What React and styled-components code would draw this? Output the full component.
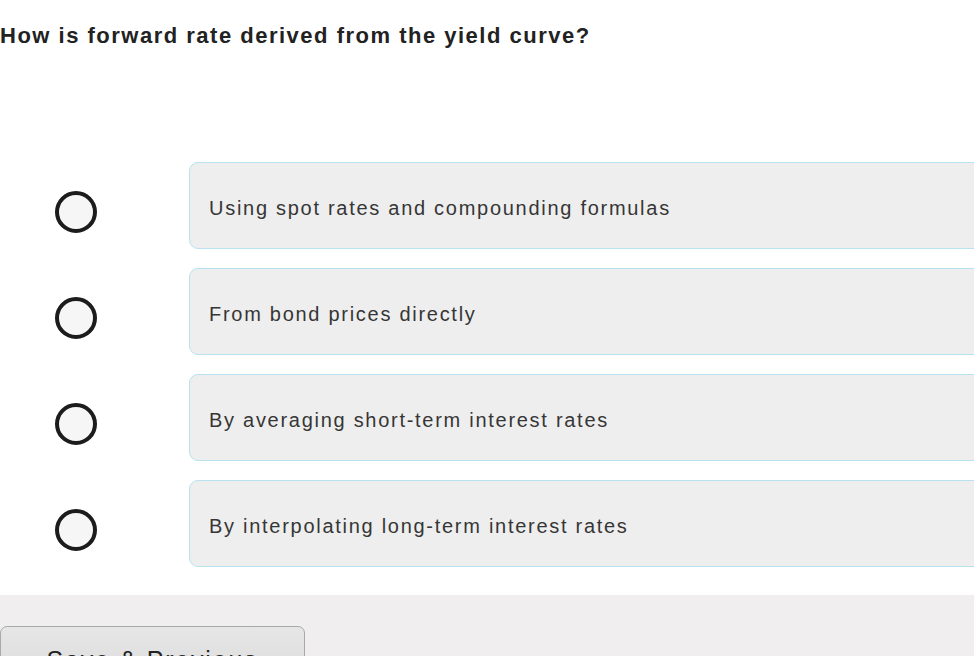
import React from "react"
import styled, { createGlobalStyle } from "styled-components"

const GlobalStyle = createGlobalStyle`
  html, body {
    margin: 0;
    padding: 0;
    background: #ffffff;
    overflow: hidden;
  }
  body {
    font-family: "Liberation Sans", Arial, Helvetica, sans-serif;
  }
`

const Page = styled.div`
  width: 974px;
  height: 656px;
  display: flex;
  flex-direction: column;
  overflow: hidden;
`

const Question = styled.h1`
  margin: 0;
  padding: 23px 0 0 0;
  font-size: 22px;
  line-height: 25px;
  font-weight: 700;
  letter-spacing: 1.5px;
  color: #222222;
`

const Options = styled.ul`
  list-style: none;
  margin: 114px 0 0 0;
  padding: 0;
  display: flex;
  flex-direction: column;
  gap: 19px;
`

const OptionRow = styled.li`
  display: flex;
  align-items: center;
`

const RadioCell = styled.div`
  width: 189px;
  flex: none;
  display: flex;
  align-items: center;
  padding: 13px 0 0 55px;
  box-sizing: border-box;
`

const Radio = styled.span`
  display: block;
  width: 42px;
  height: 42px;
  box-sizing: border-box;
  border: 4.5px solid #1c1c1c;
  border-radius: 50%;
  background: #f6f6f6;
`

const OptionBox = styled.div`
  flex: 1;
  height: 87px;
  box-sizing: border-box;
  margin-right: -20px;
  display: flex;
  align-items: center;
  padding: 6px 0 0 19px;
  background: #eeeeee;
  border: 1px solid #b9e2f1;
  border-radius: 9px;
  font-size: 20px;
  letter-spacing: 1.72px;
  color: #363636;
`

const Footer = styled.div`
  margin-top: 28px;
  flex: 1;
  background: #f0eeef;
  padding-top: 31px;
`

const NavButton = styled.button`
  display: block;
  width: 305px;
  height: 56px;
  margin: 0;
  padding: 12px 0 0 0;
  box-sizing: border-box;
  text-align: center;
  font-family: "Liberation Sans", Arial, Helvetica, sans-serif;
  font-size: 25px;
  letter-spacing: 1.8px;
  color: #222222;
  background: linear-gradient(#e6e6e6, #dcdcdc);
  border: 1px solid #a9a9a9;
  border-radius: 7px;
  line-height: 30px;
`

const answers = [
  "Using spot rates and compounding formulas",
  "From bond prices directly",
  "By averaging short-term interest rates",
  "By interpolating long-term interest rates",
]

export default function App() {
  return (
    <Page>
      <GlobalStyle />
      <Question>How is forward rate derived from the yield curve?</Question>
      <Options>
        {answers.map(text => (
          <OptionRow key={text}>
            <RadioCell>
              <Radio />
            </RadioCell>
            <OptionBox>{text}</OptionBox>
          </OptionRow>
        ))}
      </Options>
      <Footer>
        <NavButton>Save &amp; Previous</NavButton>
      </Footer>
    </Page>
  )
}
